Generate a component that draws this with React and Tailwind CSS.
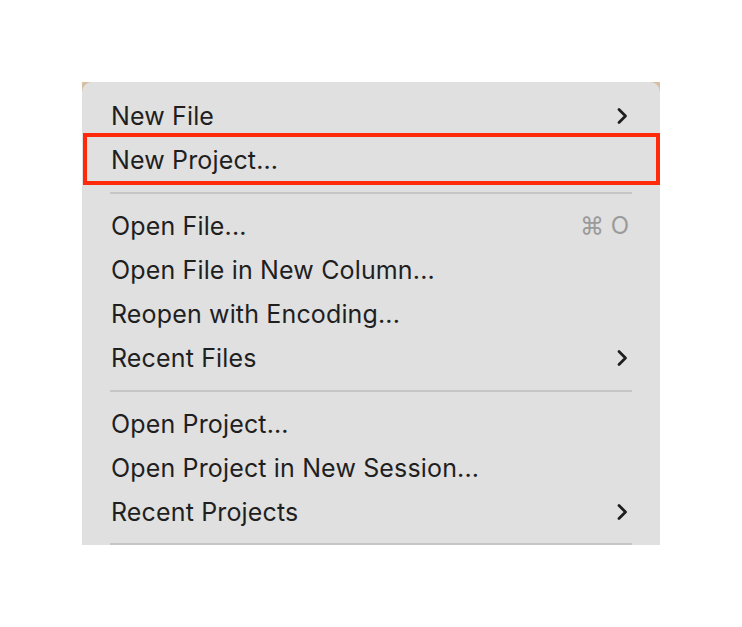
import React from "react";

const Chevron = () => (
  <svg width="14" height="18" viewBox="0 0 14 18" className="text-[#1e1e1e]">
    <path d="M4 2.5 L10.5 9 L4 15.5" fill="none" stroke="currentColor" strokeWidth="2.8" strokeLinecap="round" strokeLinejoin="round" />
  </svg>
);

const Row = ({ label, right, highlight }) => (
  <div className="relative h-[44px] flex items-center pl-[29px] pr-[31px]">
    {highlight && (
      <div className="absolute left-[1px] right-0 top-[-5px] bottom-[-3px] border-[4px] border-[#ff2a0a]" />
    )}
    <span className="flex-1 text-[25px] tracking-[0.15px] text-[#1f1f1f] leading-none pt-[1px]">{label}</span>
    {right}
  </div>
);

const Sep = ({ last }) => (
  <div className={last ? "h-[11px] flex items-end pl-[28px] pr-[28px]" : "h-[22px] flex items-center pl-[28px] pr-[28px]"}>
    <div className="h-[2px] w-full bg-[#c6c6c6]" />
  </div>
);

export default function App() {
  return (
    <div className="w-[742px] h-[627px] bg-white pt-[82px] pl-[82px]" style={{ fontFamily: "Inter, 'Liberation Sans', sans-serif" }}>
      <div className="w-[578px] bg-[#d7bfa4]">
        <div className="bg-[#e0e0e0] rounded-t-[10px] pt-[12px]">
          <Row label="New File" right={<Chevron />} />
          <Row label="New Project..." highlight />
          <Sep />
          <Row label="Open File..." right={<span className="text-[24px] text-[#9a9a9a] leading-none">⌘ O</span>} />
          <Row label="Open File in New Column..." />
          <Row label="Reopen with Encoding..." />
          <Row label="Recent Files" right={<Chevron />} />
          <Sep />
          <Row label="Open Project..." />
          <Row label="Open Project in New Session..." />
          <Row label="Recent Projects" right={<Chevron />} />
          <Sep last />
        </div>
      </div>
    </div>
  );
}
